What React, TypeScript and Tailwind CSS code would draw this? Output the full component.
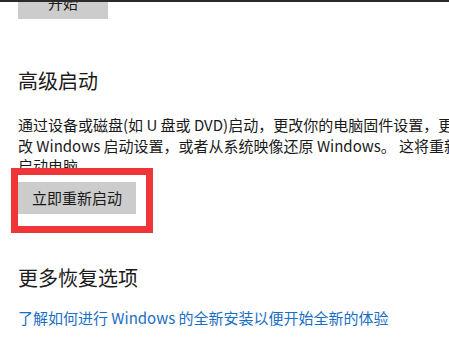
import React from "react";

const font = { fontFamily: '"Noto Sans CJK SC", "Noto Sans", sans-serif' };

// Advanced startup section of the recovery settings page
const App: React.FC = () => {
  return (
    <div className="relative w-[449px] h-[340px] overflow-hidden bg-white text-[#1a1a1a]" style={font}>
      {/* window edge over the top */}
      <div className="absolute left-0 right-0 top-0 h-[2px] bg-[#2a2a2a]" />

      <div className="pl-[18px]">
        <button className="-mt-[13px] block w-[90px] h-[32px] bg-[#cccccc] text-[15px] leading-[32px] text-center">
          开始
        </button>

        <h2 className="mt-[48px] text-[20px] leading-[28px] font-normal">高级启动</h2>

        <div className="mt-[20px] text-[15px] leading-[20.5px] whitespace-nowrap">
          <p>通过设备或磁盘(如 U 盘或 DVD)启动，更改你的电脑固件设置，更改</p>
          <p>改 Windows 启动设置，或者从系统映像还原 Windows。 这将重新启动</p>
          <p>启动电脑。</p>
        </div>

        <div className="relative">
          <button className="mt-[5px] block w-[118px] h-[32px] bg-[#cccccc] text-[15px] leading-[32px] text-center">
            立即重新启动
          </button>
          {/* red annotation frame */}
          <div className="absolute -left-[7px] -top-[14px] w-[142px] h-[65px] border-[7px] border-[#f03438]" />
        </div>

        <h2 className="mt-[50px] text-[20px] leading-[28px] font-normal">更多恢复选项</h2>

        <a className="mt-[16px] block text-[15px] leading-[20px] text-[#1a6ec4] whitespace-nowrap">
          了解如何进行 Windows 的全新安装以便开始全新的体验
        </a>
      </div>
    </div>
  );
};

export default App;
